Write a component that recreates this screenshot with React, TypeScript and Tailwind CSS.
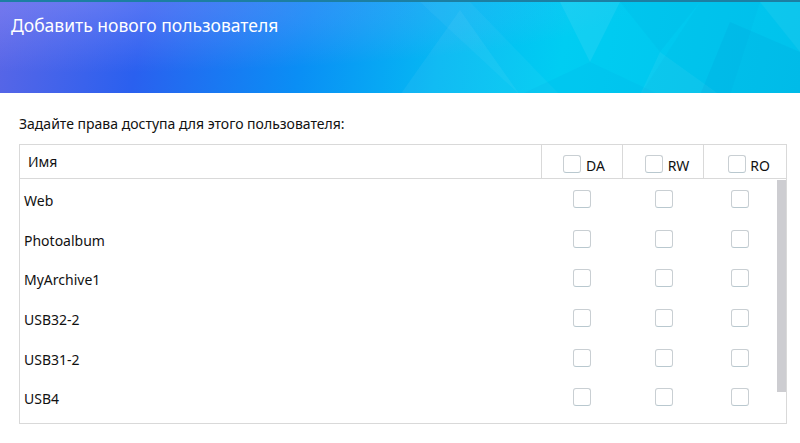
import React from "react";

const shares = ["Web", "Photoalbum", "MyArchive1", "USB32-2", "USB31-2", "USB4"];

function Box({ className = "" }: { className?: string }) {
  return (
    <span
      className={
        "inline-block h-[18px] w-[18px] shrink-0 rounded-[3px] border border-[#c9cfd3] border-b-[#b9c8cf] bg-white " +
        className
      }
    />
  );
}

function HeaderBanner() {
  return (
    <div className="relative h-[93px] w-full overflow-hidden border-t-[2px] border-[#1c7fa3] bg-[linear-gradient(100deg,#5a66e6_0%,#2a60ef_18%,#0a8ef5_38%,#05b8f3_55%,#00cdf2_70%,#00c2ec_100%)]">
      {/* soft light in the top-left corner */}
      <div className="absolute inset-0 bg-[radial-gradient(ellipse_at_10%_0%,rgba(170,160,255,0.35),transparent_55%)]" />
      {/* faceted triangles on the right side */}
      <svg className="absolute inset-0" width="800" height="93" viewBox="0 0 800 93">
        <polygon points="460,8 400,93 520,93" fill="#ffffff" opacity="0.05" />
        <polygon points="420,0 520,93 560,93 470,0" fill="#ffffff" opacity="0.04" />
        <polygon points="560,0 620,0 590,60" fill="#ffffff" opacity="0.07" />
        <polygon points="590,60 520,93 660,93" fill="#0090d8" opacity="0.08" />
        <polygon points="620,0 700,0 660,50" fill="#0088cc" opacity="0.07" />
        <polygon points="660,50 640,93 720,93" fill="#ffffff" opacity="0.05" />
        <polygon points="700,0 760,0 730,93 640,93" fill="#0080c8" opacity="0.06" />
        <polygon points="730,20 700,93 800,93 800,50" fill="#0078c0" opacity="0.08" />
        <polygon points="760,0 800,0 800,50" fill="#ffffff" opacity="0.05" />
      </svg>
      <div className="relative pl-[11px] pt-[11px] text-[17.5px] leading-[24px] text-white [font-family:'Noto_Sans',sans-serif]">
        Добавить нового пользователя
      </div>
    </div>
  );
}

export default function App() {
  return (
    <div className="h-[443px] w-[800px] overflow-hidden bg-white [font-family:'Noto_Sans',sans-serif] text-[#111]">
      <HeaderBanner />
      <div className="pl-[19px] pr-[13px]">
        <div className="pt-[21px] pb-[11px] text-[14px] leading-[19px]">
          Задайте права доступа для этого пользователя:
        </div>
        <div className="h-[280px] w-[768px] border border-[#d9d9d9]">
          {/* column headers */}
          <div className="flex h-[34px] border-b border-[#d9d9d9] text-[14px]">
            <div className="flex flex-1 items-center pl-[8px] leading-[18px]">Имя</div>
            <div className="flex w-[81px] items-end justify-center border-l border-[#d9d9d9] pb-[5px] pl-[4px]">
              <Box />
              <span className="ml-[5px] leading-[14px]">DA</span>
            </div>
            <div className="flex w-[81px] items-end justify-center border-l border-[#d9d9d9] pb-[5px] pl-[8px]">
              <Box />
              <span className="ml-[5px] leading-[14px]">RW</span>
            </div>
            <div className="flex w-[83px] items-end justify-center border-l border-[#d9d9d9] pb-[5px] pl-[8px]">
              <Box />
              <span className="ml-[4px] leading-[14px]">RO</span>
            </div>
          </div>
          {/* share rows with scrollbar */}
          <div className="flex">
            <div className="flex-1">
              {shares.map((name) => (
                <div key={name} className="flex h-[39.7px] items-center text-[14px]">
                  <div className="flex-1 pl-[4px] pt-[3px]">{name}</div>
                  <div className="flex w-[81px] justify-center pl-[1px]">
                    <Box />
                  </div>
                  <div className="flex w-[81px] justify-center pl-[2px]">
                    <Box />
                  </div>
                  <div className="flex w-[73px] justify-center">
                    <Box />
                  </div>
                </div>
              ))}
            </div>
            <div className="w-[10px] pt-[1px]">
              <div className="ml-[1px] h-[212px] w-[9px] bg-[#cdcdd1]" />
            </div>
          </div>
        </div>
      </div>
    </div>
  );
}
